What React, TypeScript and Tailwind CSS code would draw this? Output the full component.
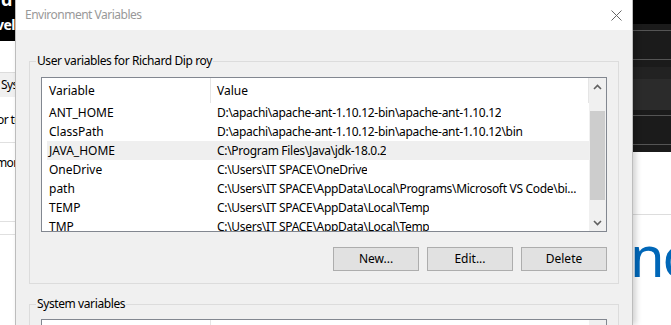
import React from 'react';

const userVars = [
  ['ANT_HOME', 'D:\\apachi\\apache-ant-1.10.12-bin\\apache-ant-1.10.12'],
  ['ClassPath', 'D:\\apachi\\apache-ant-1.10.12-bin\\apache-ant-1.10.12\\bin'],
  ['JAVA_HOME', 'C:\\Program Files\\Java\\jdk-18.0.2'],
  ['OneDrive', 'C:\\Users\\IT SPACE\\OneDrive'],
  ['path', 'C:\\Users\\IT SPACE\\AppData\\Local\\Programs\\Microsoft VS Code\\bi...'],
  ['TEMP', 'C:\\Users\\IT SPACE\\AppData\\Local\\Temp'],
  ['TMP', 'C:\\Users\\IT SPACE\\AppData\\Local\\Temp'],
];

const Chevron = ({ up }: { up?: boolean }) => (
  <svg width="9" height="6" viewBox="0 0 9 6" className={up ? '' : 'rotate-180'}>
    <path d="M1 5 L4.5 1.5 L8 5" fill="none" stroke="#606060" strokeWidth="1.6" />
  </svg>
);

const Scrollbar = () => (
  <div className="w-[17px] shrink-0 flex flex-col bg-[#f0f0f0]">
    <div className="h-[17px] flex items-center justify-center">
      <Chevron up />
    </div>
    <div className="flex-1 px-[1px]">
      <div className="mt-[16px] h-[89px] bg-[#cdcdcd]" />
    </div>
    <div className="h-[17px] flex items-center justify-center">
      <Chevron />
    </div>
  </div>
);

const ListBox = ({ rows }: { rows: string[][] }) => (
  <div className="h-[155px] border border-[#828790] bg-white flex overflow-hidden">
    <div className="flex-1 min-w-0 flex flex-col pl-[5px]">
      <div className="flex h-[25px] shrink-0 items-center border-r border-[#e5e5e5]">
        <div className="w-[164px] h-full flex items-center pl-[2px] border-r border-[#e5e5e5]">Variable</div>
        <div className="pl-[6px]">Value</div>
      </div>
      {rows.map(([name, value]) => (
        <div
          key={name}
          className={`flex h-[19px] shrink-0 items-center whitespace-nowrap ${name === 'JAVA_HOME' ? 'bg-[#efefef]' : ''}`}
        >
          <div className="w-[164px] shrink-0 pl-[2px]">{name}</div>
          <div className="pl-[6px] min-w-0 overflow-hidden tracking-[-0.3px]">{value}</div>
        </div>
      ))}
    </div>
    <Scrollbar />
  </div>
);

const Btn = ({ label }: { label: string }) => (
  <button className="w-[86px] h-[24px] border border-[#adadad] bg-[#e1e1e1] text-black">{label}</button>
);

export default function App() {
  return (
    <div className="w-[671px] h-[325px] overflow-hidden flex text-[12px] text-black" style={{ fontFamily: '"Segoe UI", "Noto Sans", sans-serif' }}>
      {/* left: window behind */}
      <div className="w-[15px] shrink-0 flex flex-col overflow-hidden bg-white tracking-[-0.6px]">
        <div className="h-[41px] bg-black text-white font-bold leading-none whitespace-nowrap">
          <div className="text-[18px] -mt-[10px] ml-[1px]">d</div>
          <div className="text-[14px] mt-[10px] -ml-[4px]">vel</div>
        </div>
        <div className="h-[31px]" />
        <div className="h-[25px] bg-[#f0f0f0] border-t border-[#dcdcdc] flex items-center whitespace-nowrap pl-[1px]">Sys</div>
        <div className="h-[46px] border-b border-[#e0e0e0] flex items-center whitespace-nowrap -ml-[3px]">or to</div>
        <div className="h-[40px] flex items-center whitespace-nowrap -ml-[4px]">mor</div>
        <div className="h-[39px] border-b border-[#e0e0e0]" />
        <div className="h-[13px] border-b border-[#e0e0e0]" />
      </div>

      {/* dialog */}
      <div className="w-[618px] shrink-0 h-full flex flex-col border-l border-r border-[#bdbdbd] shadow-[3px_0_6px_rgba(0,0,0,0.18)] z-10">
        <div className="h-[30px] shrink-0 bg-white flex items-center justify-between pl-[9px] pr-[10px]">
          <span className="text-[#999999] tracking-[-0.5px]">Environment Variables</span>
          <svg width="11" height="11" viewBox="0 0 11 11">
            <path d="M0.5 0.5 L10.5 10.5 M10.5 0.5 L0.5 10.5" stroke="#666666" strokeWidth="1" />
          </svg>
        </div>
        <div className="flex-1 bg-[#f0f0f0] pt-[23px]">
          <fieldset className="min-w-0 mx-[13px] border border-[#dcdcdc] px-[11px] pb-[12px]">
            <legend className="-ml-[5px] px-[1px] leading-[16px] tracking-[-0.4px]">User variables for Richard Dip roy</legend>
            <div className="pt-[8px]">
              <ListBox rows={userVars} />
            </div>
            <div className="flex justify-end gap-[8px] mt-[15px]">
              <Btn label="New..." />
              <Btn label="Edit..." />
              <Btn label="Delete" />
            </div>
          </fieldset>
          <fieldset className="min-w-0 mx-[13px] mt-[12px] border border-[#dcdcdc] px-[11px] pb-[12px]">
            <legend className="-ml-[5px] px-[1px] leading-[16px] tracking-[-0.4px]">System variables</legend>
            <div className="pt-[7px]">
              <div className="h-[60px] border border-[#828790] bg-white flex">
                <div className="flex-1 pl-[5px]">
                  <div className="w-[164px] h-[25px] border-r border-[#e5e5e5]" />
                </div>
                <div className="w-[17px] bg-[#f0f0f0]" />
              </div>
            </div>
          </fieldset>
        </div>
      </div>

      {/* right: window behind */}
      <div className="flex-1 flex flex-col overflow-hidden">
        <div className="h-[24px] shrink-0 bg-black" />
        <div className="h-[6px] shrink-0 bg-[#1b1b1b]" />
        <div className="h-[1px] shrink-0 bg-[#555555]" />
        <div className="h-[28px] shrink-0 bg-[#1b1b1b]" />
        <div className="h-[1px] shrink-0 bg-[#555555]" />
        <div className="h-[7px] shrink-0 bg-[#1b1b1b]" />
        <div className="h-[12px] shrink-0 bg-[#222222]" />
        <div className="h-[31px] shrink-0 bg-[#2b2b2b]" />
        <div className="h-[5px] shrink-0 bg-[#1b1b1b]" />
        <div className="h-[1px] shrink-0 bg-[#555555]" />
        <div className="h-[28px] shrink-0 bg-[#1b1b1b]" />
        <div className="h-[1px] shrink-0 bg-[#555555]" />
        <div className="h-[7px] shrink-0 bg-[#1b1b1b]" />
        <div className="h-[63px] shrink-0 bg-white border-b border-[#dddddd]" />
        <div className="flex-1 bg-white whitespace-nowrap overflow-hidden">
          <div className="text-[56px] leading-none text-[#0067b8] mt-[12px] -ml-[3px] tracking-[-2px]" style={{ fontFamily: '"Noto Sans", sans-serif' }}>nc</div>
        </div>
      </div>
    </div>
  );
}
